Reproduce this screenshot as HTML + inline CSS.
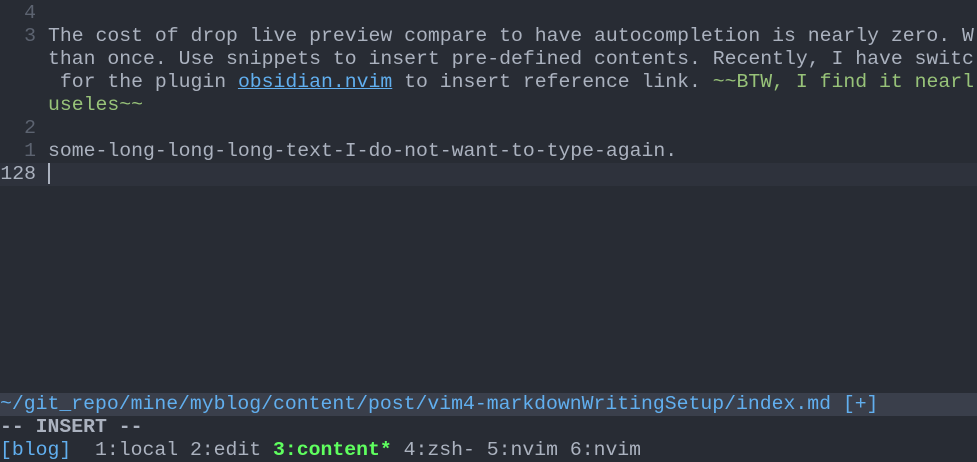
<!DOCTYPE html>
<html><head><meta charset="utf-8"><style>
html,body{margin:0;padding:0;width:977px;height:449px;overflow:hidden;background:#282c34;}
body{font-family:"Liberation Mono","DejaVu Sans Mono",monospace;font-size:19.8px;color:#abb2bf;}
.r{position:absolute;left:0;height:23px;line-height:23px;white-space:pre;width:977px;}
.n{color:#5c6370;display:inline-block;width:36px;text-align:right;margin-right:12px;}
.g{color:#98c379}
.l{color:#61afef;text-decoration:underline;}
.cur{background:#2e323c}
.st{background:#3a3f4b;color:#61afef}
</style></head><body>
<div class="r" style="top:2px"><span class="n">4</span></div>
<div class="r" style="top:25px"><span class="n">3</span>The cost of drop live preview compare to have autocompletion is nearly zero. W</div>
<div class="r" style="top:48px"><span class="n"></span>than once. Use snippets to insert pre-defined contents. Recently, I have switc</div>
<div class="r" style="top:71px"><span class="n"></span> for the plugin <span class="l">obsidian.nvim</span> to insert reference link. <span class="g">~~BTW, I find it nearl</span></div>
<div class="r" style="top:94px"><span class="n"></span><span class="g">useles~~</span></div>
<div class="r" style="top:117px"><span class="n">2</span></div>
<div class="r" style="top:140px"><span class="n">1</span>some-long-long-long-text-I-do-not-want-to-type-again.</div>
<div class="r cur" style="top:163px"><span class="n" style="color:#abb2bf">128</span><span style="display:inline-block;width:2px;height:21px;background:#abb2bf;vertical-align:middle"></span></div>
<div class="r st" style="top:393px">~/git_repo/mine/myblog/content/post/vim4-markdownWritingSetup/index.md [+]</div>
<div class="r" style="top:416px;font-weight:bold">-- INSERT --</div>
<div class="r" style="top:439px"><span style="color:#61afef">[blog]</span>  1:local 2:edit <span style="color:#5fff5f;font-weight:bold">3:content*</span> 4:zsh- 5:nvim 6:nvim</div>
</body></html>
